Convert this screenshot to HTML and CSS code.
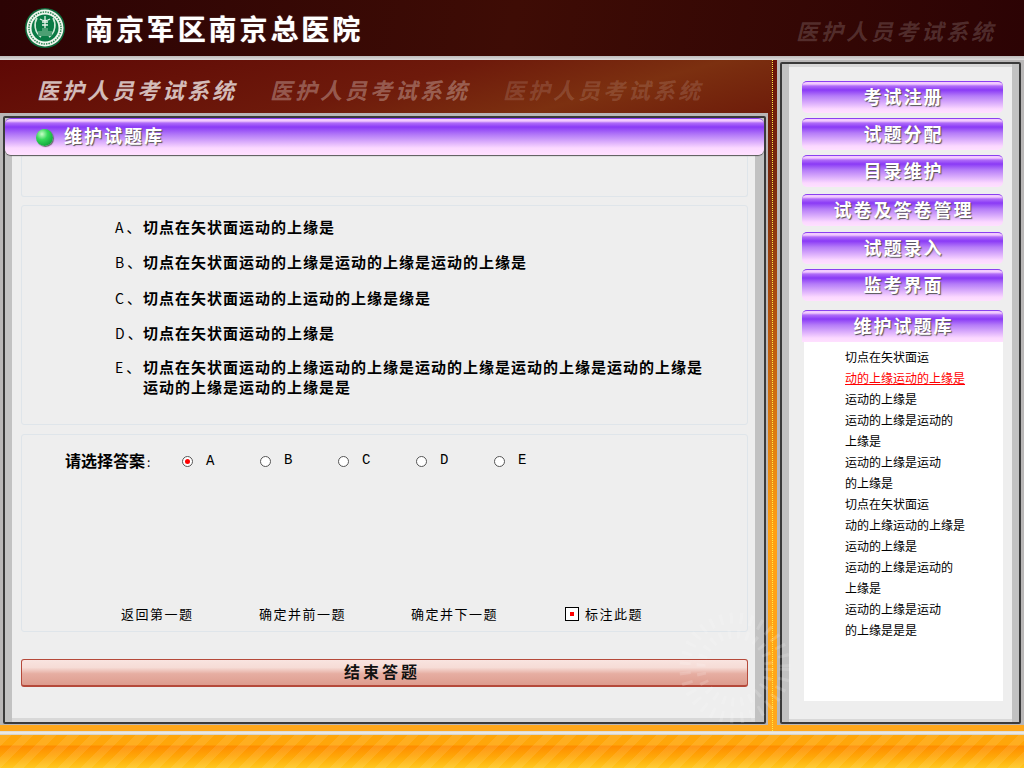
FILE: index.html
```html
<!DOCTYPE html>
<html lang="zh">
<head>
<meta charset="utf-8">
<title>南京军区南京总医院</title>
<link rel="stylesheet" href="styles.css">
</head>
<body>
<div class="page">
  <header class="top">
    <svg class="logo" viewBox="0 0 40 40" width="40" height="40">
      <circle cx="20" cy="20" r="20" fill="#0f6b3c"/>
      <circle cx="20" cy="20" r="18.5" fill="#f1f6ee"/>
      <circle cx="20" cy="20" r="16" fill="none" stroke="#2f8a58" stroke-width="1.5" stroke-dasharray="1.5 1"/>
      <circle cx="20" cy="20" r="13.5" fill="#0a7a45"/>
      <path d="M12 10c-3 5-3 14 4 19M28 10c3 5 3 14-4 19" fill="none" stroke="#cfe8d6" stroke-width="1.6"/>
      <path d="M20 8v14M15 11c3 2 7 2 10 0M17 14h6M17 17h6" fill="none" stroke="#e8f4ea" stroke-width="1.3"/>
      <path d="M13 28v-5h4v-3h6v3h4v5z" fill="#4c9f73"/>
    </svg>
    <h1 class="brand">南京军区南京总医院</h1>
    <div class="top-mark">医护人员考试系统</div>
  </header>
  <div class="rule"></div>
  <main class="main">
    <section class="left">
      <div class="tabs">
        <span class="tab tab-a">医护人员考试系统</span>
        <span class="tab tab-b">医护人员考试系统</span>
        <span class="tab tab-c">医护人员考试系统</span>
      </div>
      <div class="panel">
        <div class="frame frame-left">
          <h2 class="title-bar"><i class="ball"></i>维护试题库</h2>
          <div class="box box-head"></div>
          <div class="box box-options">
            <div class="opt opt-a"><span class="opt-key">A、</span><span>切点在矢状面运动的上缘是</span></div>
            <div class="opt opt-b"><span class="opt-key">B、</span><span>切点在矢状面运动的上缘是运动的上缘是运动的上缘是</span></div>
            <div class="opt opt-c"><span class="opt-key">C、</span><span>切点在矢状面运动的上运动的上缘是缘是</span></div>
            <div class="opt opt-d"><span class="opt-key">D、</span><span>切点在矢状面运动的上缘是</span></div>
            <div class="opt opt-e"><span class="opt-key">E、</span><span>切点在矢状面运动的上缘运动的上缘是运动的上缘是运动的上缘是运动的上缘是<br>运动的上缘是运动的上缘是是</span></div>
          </div>
          <div class="box box-answer">
            <div class="answer-row">
              <span class="answer-label">请选择答案<em>:</em></span>
              <span class="choice"><i class="radio on"></i><span>A</span></span>
              <span class="choice"><i class="radio"></i><span class="up">B</span></span>
              <span class="choice"><i class="radio"></i><span class="up">C</span></span>
              <span class="choice"><i class="radio"></i><span class="up">D</span></span>
              <span class="choice"><i class="radio"></i><span class="up">E</span></span>
            </div>
            <div class="nav-row">
              <span class="nav-first">返回第一题</span>
              <span class="nav-prev">确定并前一题</span>
              <span class="nav-next">确定并下一题</span>
              <span class="nav-mark"><i class="check"></i>标注此题</span>
            </div>
          </div>
          <div class="finish">结束答题</div>
        </div>
      </div>
    </section>
    <aside class="panel panel-right">
      <div class="frame frame-right">
        <div class="menu-btn m1">考试注册</div>
        <div class="menu-btn m2">试题分配</div>
        <div class="menu-btn m3">目录维护</div>
        <div class="menu-btn m4">试卷及答卷管理</div>
        <div class="menu-btn m5">试题录入</div>
        <div class="menu-btn m6">监考界面</div>
        <div class="menu-btn menu-cur">维护试题库</div>
        <ul class="list">
          <li>切点在矢状面运</li>
          <li class="hot">动的上缘运动的上缘是</li>
          <li>运动的上缘是</li>
          <li>运动的上缘是运动的</li>
          <li>上缘是</li>
          <li>运动的上缘是运动</li>
          <li>的上缘是</li>
          <li>切点在矢状面运</li>
          <li>动的上缘运动的上缘是</li>
          <li>运动的上缘是</li>
          <li>运动的上缘是运动的</li>
          <li>上缘是</li>
          <li>运动的上缘是运动</li>
          <li>的上缘是是是</li>
        </ul>
      </div>
    </aside>
    <svg class="watermark" viewBox="0 0 120 120" width="120" height="120">
      <g fill="none" stroke="#fff" stroke-opacity=".16">
        <circle cx="60" cy="60" r="34" stroke-width="9" stroke-dasharray="3 6"/>
        <circle cx="60" cy="60" r="50" stroke-width="11" stroke-dasharray="3 7"/>
      </g>
    </svg>
  </main>
  <footer class="foot-wrap">
    <div class="foot-rule"></div>
    <div class="foot"></div>
  </footer>
</div>
</body>
</html>
```
FILE: styles.css
```css
* { box-sizing: border-box; }
html, body { margin: 0; padding: 0; background: #ffa81c; }
body { font-family: "Noto Sans CJK SC", "Liberation Sans", sans-serif; color: #000; }
.page { width: 1024px; height: 768px; display: flex; flex-direction: column; overflow: hidden; }

.top {
  height: 56px; flex: none; display: flex; align-items: center; padding-left: 25px;
  background: linear-gradient(100deg, #2c0304 0%, #3e0c05 50%, #2c0304 100%);
}
.logo { flex: none; }
.brand {
  margin: 0 0 0 20px; font-size: 28px; line-height: 1; font-weight: 700; letter-spacing: 2.9px;
  color: #fff; text-shadow: 0 0 1px #bbb;
}
.top-mark {
  margin: 4px 28px 0 auto; font-size: 22px; line-height: 1; font-weight: 700; font-style: italic;
  letter-spacing: 3px; color: rgba(255, 255, 255, .16);
}
.rule { height: 4px; flex: none; background: linear-gradient(#bdbaba, #dedcdc); }

.main {
  position: relative; height: 671px; flex: none; display: flex;
  background: linear-gradient(#6a1208 0%, #7a2a0e 18%, #b8560f 40%, #ff9f14 70%, #ffa81c 100%);
}
.left { width: 773px; flex: none; border-right: 1px dotted #ffee44; }
.tabs {
  height: 53px; display: flex; align-items: center; padding: 5px 0 0 37px;
  background: linear-gradient(165deg, #5e0805 0%, #6e1a0b 50%, #7c3010 75%, #6e1c0a 100%);
}
.tab {
  width: 233px; flex: none; font-size: 22px; line-height: 1; font-weight: 700; font-style: italic;
  letter-spacing: 3px;
}
.tab-a { color: rgba(255, 255, 255, .72); }
.tab-b { color: rgba(255, 255, 255, .3); }
.tab-c { color: rgba(255, 255, 255, .14); }

.panel { background: #b9b7b7; padding: 3px 2px 1px 3px; width: 768px; height: 612px; }
.frame { border: 2px solid #3a3a3a; height: 100%; background: #eee; border-radius: 2px; }
.frame-left {
  padding: 0 16px; box-shadow: inset 7px 0 0 #c2c2c2, inset -9px 0 0 #c2c2c2, inset 0 -4px 0 #d8d8d8;
}
.title-bar {
  margin: 0 -16px; height: 37px; position: relative; display: flex; align-items: center; padding: 0 0 4px 31px;
  font-size: 18px; line-height: 1; font-weight: 700; letter-spacing: 2px; color: #fff; text-shadow: 1px 1px 1px #555;
  border-radius: 6px;
  border-top: 1px solid #8b3ff0;
  background: linear-gradient(#f2caff 0, #f2caff 2px, #b06cf8 4px, #8a3af6 8px, #b57cf8 16px, #fbd8ff 29px, #ffe0ff 35px);
  box-shadow: 0 1px 1px #555;
}
.ball {
  width: 17px; height: 17px; border-radius: 50%; margin: 5px 11px 0 0; flex: none;
  background: radial-gradient(circle at 35% 30%, #c8ffc8 0, #36d95a 35%, #12a83c 75%, #0c7a2c 100%);
  box-shadow: 1px 1px 1px #666;
}
.box { border: 1px solid #dfe5ea; border-radius: 3px; background: #eee; }
.box-head { height: 42px; border-top: 0; }
.box-options { height: 220px; margin-top: 8px; padding: 11px 0 0 93px; position: relative; }
.opt { display: flex; font-size: 15px; line-height: 20px; font-weight: 700; letter-spacing: 1px; }
.opt-key { width: 28px; flex: none; font-size: 14px; font-weight: 400; letter-spacing: 3px; white-space: nowrap; }
.opt-b, .opt-c, .opt-d { margin-top: 15px; }
.opt-c { margin-top: 16px; }
.opt-e { margin-top: 14px; }
.box-answer { height: 198px; margin-top: 9px; position: relative; display: flex; flex-direction: column; justify-content: space-between; }
.answer-row { display: flex; align-items: center; padding: 15px 0 0 43px; font-size: 14px; line-height: 20px; }
.answer-label { width: 117px; flex: none; font-weight: 700; font-size: 16px; }
.answer-label em { font-style: normal; font-weight: 400; margin-left: 2px; font-size: 12px; }
.choice { width: 78px; flex: none; display: flex; align-items: center; font-family: "Liberation Mono", monospace; font-size: 14px; }
.radio {
  width: 11px; height: 11px; border-radius: 50%; border: 1px solid #555; background: #fff; margin-right: 13px; flex: none;
  display: flex; align-items: center; justify-content: center;
}
.radio.on::after { content: ""; width: 5px; height: 5px; border-radius: 50%; background: #f00; }
.up { margin-bottom: 2px; }
.nav-row { display: flex; align-items: center; height: 20px; margin-bottom: 7px; padding-left: 99px; font-size: 13px; line-height: 20px; letter-spacing: 1.5px; }
.nav-first { width: 138px; flex: none; }
.nav-prev { width: 152px; flex: none; }
.nav-next { width: 154px; flex: none; }
.nav-mark { display: flex; align-items: center; }
.check {
  width: 14px; height: 14px; border: 1px solid #000; background: #fff; margin-right: 6px; flex: none;
  display: flex; align-items: center; justify-content: center;
}
.check::after { content: ""; width: 4px; height: 4px; background: #f00; }
.finish {
  margin-top: 27px; height: 28px; padding: 0 5px 3px 0; border: 1px solid #b5493a; border-bottom-width: 2px; border-radius: 3px;
  display: flex; align-items: center; justify-content: center;
  font-size: 16px; line-height: 1; font-weight: 700; letter-spacing: 3px; color: #111;
  background: linear-gradient(#f9e4e0 0, #f6dcd6 30%, #e6aea2 55%, #dd9c8e 100%);
}

.panel-right { margin-left: 4px; width: 247px; height: 665px; padding: 2px 3px 1px 3px; flex: none; }
.frame-right {
  padding: 17px 16px 0 20px; display: flex; flex-direction: column;
  box-shadow: inset 7px 0 0 #c2c2c2, inset -7px 0 0 #c2c2c2, inset 0 -3px 0 #d8d8d8, inset 0 3px 0 #d8d8d8;
}
.menu-btn {
  width: 201px; height: 32px; margin-bottom: 5px; padding: 0 0 3px 2px; flex: none; display: flex; align-items: center; justify-content: center;
  border-radius: 5px; border-top: 1px solid #8b3ff0;
  font-size: 18px; line-height: 1; font-weight: 700; letter-spacing: 2px; color: #fff; text-shadow: 1px 1px 1px #555;
  background: linear-gradient(#f2caff 0, #f2caff 2px, #b06cf8 4px, #8a3af6 8px, #b57cf8 14px, #fbd8ff 27px, #ffe0ff 31px);
}
.m3 { margin-bottom: 7px; }
.m4 { margin-bottom: 6px; }
.m6 { margin-bottom: 9px; }
.menu-cur { margin-bottom: 0; border-radius: 5px 5px 0 0; }
.list {
  list-style: none; margin: 0 0 0 2px; padding: 4px 0 0 41px; width: 199px; height: 359px; background: #fff;
  font-size: 12px; line-height: 21px; letter-spacing: 0;
}
.hot { color: #f00; text-decoration: underline; }

.watermark { position: absolute; left: 675px; top: 548px; pointer-events: none; }

.foot-wrap { flex: 1; display: flex; flex-direction: column; }
.foot-rule { height: 4px; flex: none; background: linear-gradient(#d9d6d0, #f2efe8, #cfccc5); }
.foot {
  flex: 1;
  background:
    repeating-linear-gradient(135deg, rgba(255,255,255,.09) 0 8px, rgba(255,255,255,0) 8px 16px),
    linear-gradient(#ffa60a 0, #ffa60a 10px, #ff8c00 11px, #ffa808 22px, #ffc820 33px);
}
```
